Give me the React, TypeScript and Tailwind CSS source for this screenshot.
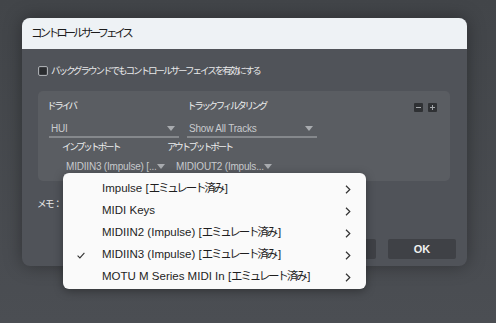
import React from 'react';

const font = 'font-["Liberation_Sans","Noto_Sans_CJK_JP",sans-serif]';

interface DropProps {
  label: string;
  width: string;
}

const Drop: React.FC<DropProps> = ({ label, width }) => (
  <div className={`${width} flex items-end justify-between border-b-2 border-[#85888c] pl-[2px] pr-[4px] h-[15px] pb-[1px]`}>
    <span className="text-[10px] leading-[13px] tracking-[-0.2px] text-[#c9cbce] whitespace-nowrap">{label}</span>
    <span className="mb-[4px] w-0 h-0 border-l-[4px] border-r-[4px] border-t-[5px] border-l-transparent border-r-transparent border-t-[#a8abaf] shrink-0" />
  </div>
);

const menuItems = [
  { en: 'Impulse ', emu: true, checked: false },
  { en: 'MIDI Keys', emu: false, checked: false },
  { en: 'MIDIIN2 (Impulse) ', emu: true, checked: false },
  { en: 'MIDIIN3 (Impulse) ', emu: true, checked: true },
  { en: 'MOTU M Series MIDI In ', emu: true, checked: false },
];

const label = 'text-[9.5px] leading-none tracking-[-2.3px] text-[#eceded]';

const App: React.FC = () => {
  return (
    <div className={`relative w-[496px] h-[323px] overflow-hidden bg-gradient-to-b from-[#424549] to-[#4b4e53] pt-[18px] pl-[22px] ${font}`}>
      <div className="w-[445px] h-[248px] rounded-[8px] overflow-hidden bg-[#505359] shadow-[0_0_18px_rgba(0,0,0,0.35)] flex flex-col">
        <div className="h-[31px] bg-[#eef2f5] flex items-center pl-[9px] text-[11.5px] tracking-[-3.1px] text-[#1c1c1c]">
          コントロールサーフェイス
        </div>

        <div className="flex-1 flex flex-col px-[16px]">
          <div className="flex items-center mt-[16px] h-[12px]">
            <span className="w-[10px] h-[10px] border border-[#a9acb0] rounded-[2px] flex items-center justify-center bg-[#3a3c40]">
              <span className="w-[6px] h-[6px] bg-[#2a2c2f]" />
            </span>
            <span className="ml-[3px] text-[9.5px] tracking-[-2px] text-[#e8e9ea] leading-none">バックグラウンドでもコントロールサーフェイスを有効にする</span>
          </div>

          <div className="mt-[14px] h-[90px] w-[412px] bg-[#5a5d62] rounded-[5px] pl-[9px] pr-[13px] pt-[10px]">
            <div className="flex items-start">
              <div className="w-[140px]">
                <div className={`${label} h-[11px]`}>ドライバ</div>
                <div className="mt-[11px] pl-[2px]">
                  <Drop label="HUI" width="w-[130px]" />
                </div>
              </div>
              <div className="w-[140px]">
                <div className={`${label} h-[11px]`}>トラックフィルタリング</div>
                <div className="mt-[11px]">
                  <Drop label="Show All Tracks" width="w-[130px]" />
                </div>
              </div>
              <div className="flex-1 flex justify-end gap-[5px] pt-[2px]">
                <span className="w-[9px] h-[9px] bg-[#2f3134] rounded-[1px] flex items-center justify-center">
                  <span className="w-[5px] h-[1px] bg-[#a4a7ab]" />
                </span>
                <span className="relative w-[9px] h-[9px] bg-[#2f3134] rounded-[1px] flex items-center justify-center">
                  <span className="w-[5px] h-[1px] bg-[#a4a7ab]" />
                  <span className="absolute w-[1px] h-[5px] bg-[#a4a7ab]" />
                </span>
              </div>
            </div>
            <div className="flex mt-[4px]">
              <div className={`w-[120px] pl-[15px] ${label}`}>インプットポート</div>
              <div className={label}>アウトプットポート</div>
            </div>
            <div className="flex mt-[9px] pl-[17px] gap-[11px]">
              <Drop label="MIDIIN3 (Impulse) [..." width="w-[99px]" />
              <Drop label="MIDIOUT2 (Impuls..." width="w-[99px]" />
            </div>
          </div>

          <div className="mt-[18px] -ml-[1px] text-[9.5px] tracking-[-1.5px] text-[#e8e9ea] leading-none">メモ：</div>

          <div className="flex-1" />
          <div className="flex justify-end gap-[12px] pb-[7px] -mr-[5px]">
            <div className="w-[68px] h-[20px] bg-[#3f4146] rounded-[2px]" />
            <div className="w-[68px] h-[20px] bg-[#3f4146] rounded-[2px] flex items-center justify-center text-[11px] font-bold text-[#f0f0f0]">
              OK
            </div>
          </div>
        </div>
      </div>

      <div className="absolute left-[63px] top-[173px] w-[303px] bg-[#fafafa] rounded-[6px] shadow-[0_2px_10px_rgba(0,0,0,0.35)] pt-[5px] pb-[1px]">
        {menuItems.map((item) => (
          <div key={item.en} className="h-[22px] flex items-center text-[11.5px] text-[#1e1e1e]">
            <span className="w-[39px] pl-[14px] flex">
              {item.checked && (
                <svg width="8" height="7" viewBox="0 0 8 7">
                  <path d="M0.6 3.6 L2.9 5.9 L7.4 0.9" fill="none" stroke="#333" strokeWidth="1.1" />
                </svg>
              )}
            </span>
            <span className="flex-1 whitespace-pre">
              {item.en}
              {item.emu && (
                <>
                  [<span className="tracking-[-2.2px]">エミュレート済み</span><span className="pl-[2px]">]</span>
                </>
              )}
            </span>
            <span className="w-[21px] flex">
              <svg width="6" height="9" viewBox="0 0 6 9">
                <path d="M1 0.8 L4.8 4.5 L1 8.2" fill="none" stroke="#333" strokeWidth="1.2" />
              </svg>
            </span>
          </div>
        ))}
      </div>
    </div>
  );
};

export default App;
